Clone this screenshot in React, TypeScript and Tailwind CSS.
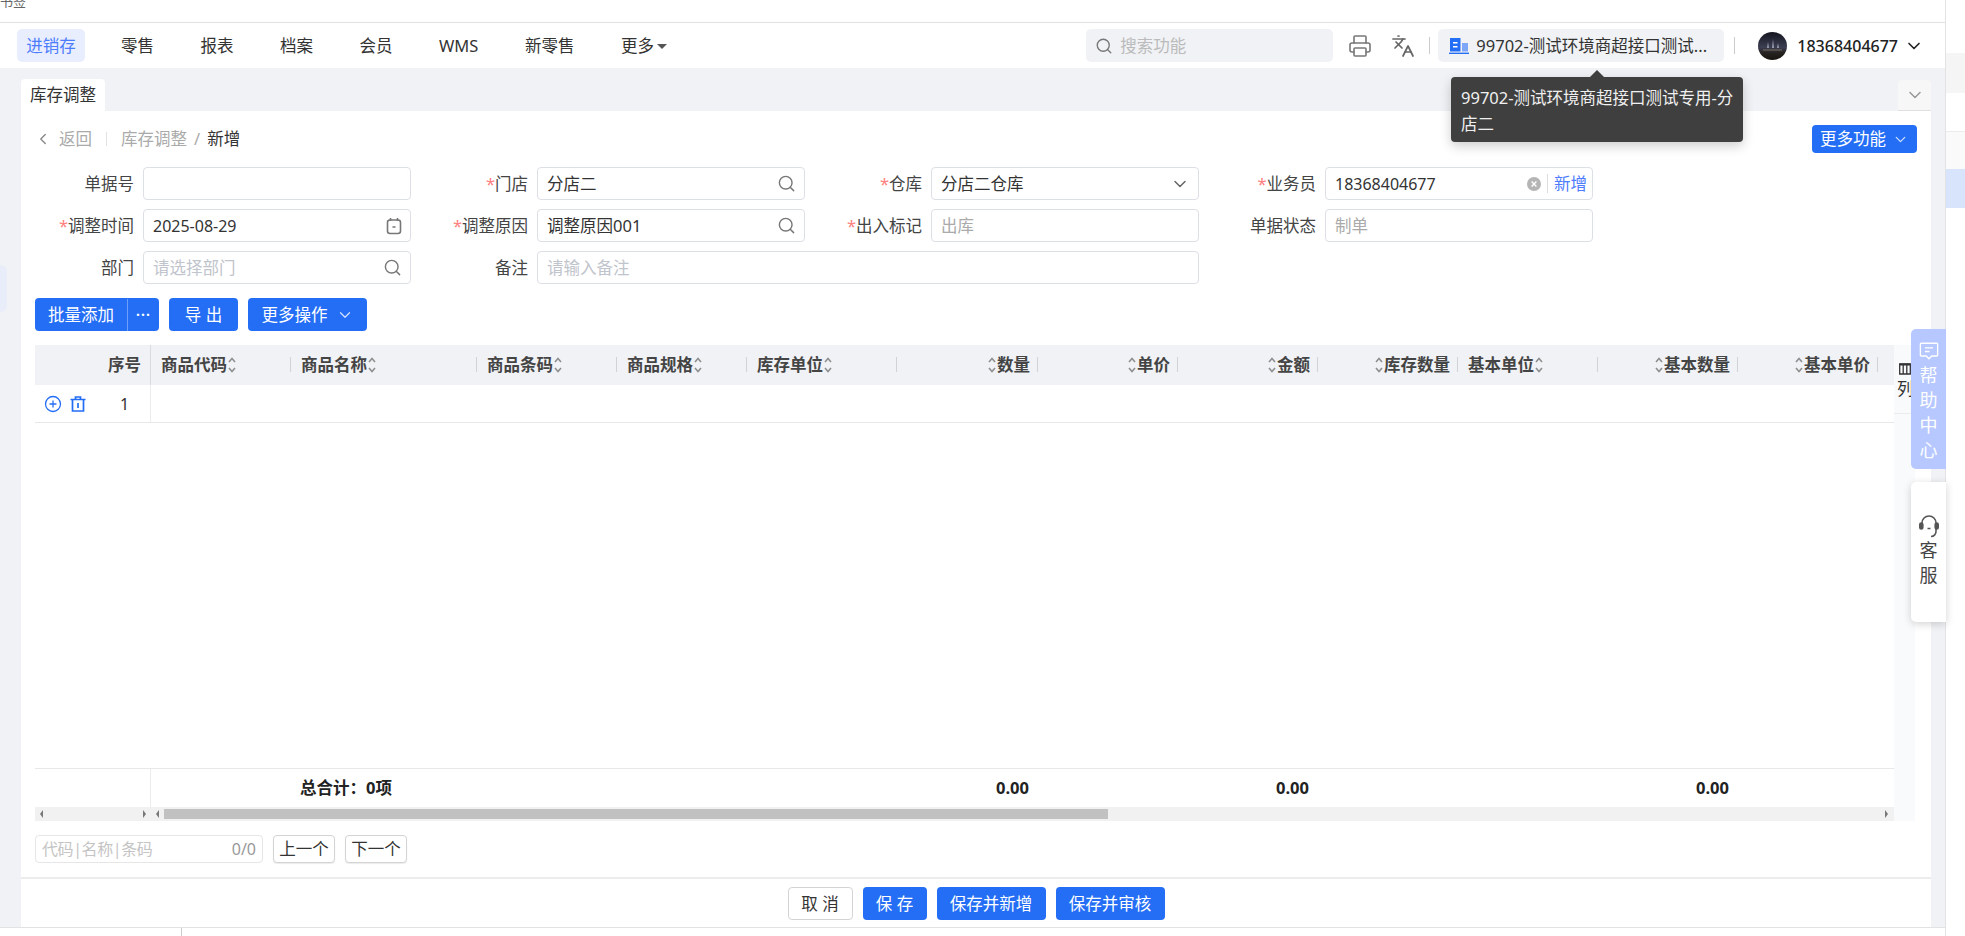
import { ChevronDown, ChevronLeft, CirclePlus, Languages, Printer, Search } from 'lucide-react'
import type { ReactNode } from 'react'

const FONT = "font-['Noto_Sans','Noto_Sans_CJK_SC',sans-serif]"

const NAV_ITEMS = ['零售', '报表', '档案', '会员', 'WMS', '新零售']

type Column = {
  label: string
  width: string
  right?: boolean
  total?: string
}

// widths come from the divider positions in the header
const COLUMNS: Column[] = [
  { label: '商品代码', width: 'w-[140px]' },
  { label: '商品名称', width: 'w-[186px]', total: '总合计：0项' },
  { label: '商品条码', width: 'w-[140px]' },
  { label: '商品规格', width: 'w-[130px]' },
  { label: '库存单位', width: 'w-[150px]' },
  { label: '数量', width: 'w-[141px]', right: true, total: '0.00' },
  { label: '单价', width: 'w-[140px]', right: true },
  { label: '金额', width: 'w-[140px]', right: true, total: '0.00' },
  { label: '库存数量', width: 'w-[140px]', right: true },
  { label: '基本单位', width: 'w-[140px]' },
  { label: '基本数量', width: 'w-[140px]', right: true, total: '0.00' },
  { label: '基本单价', width: 'w-[140px]', right: true },
]

const SortIcon = () => (
  <svg viewBox="0 0 10 20" className="h-[20px] w-[10px] shrink-0" fill="none" stroke="#8f8f8f" strokeWidth="1.6">
    <path d="M2 7l3-3.500L8 7M2 13l3 3.500L8 13" />
  </svg>
)

const Divider = () => <span className="absolute right-0 top-[12px] h-[15px] w-px bg-[#cfd2d6]" />

const HeaderCell = ({ column }: { column: Column }) => (
  <div
    className={`relative flex h-full shrink-0 items-center ${column.width} ${
      column.right ? 'justify-end pr-[8px]' : 'pl-[10px]'
    }`}
  >
    {column.right && <SortIcon />}
    <span className="text-[16.5px] font-bold leading-none text-[#444]">{column.label}</span>
    {!column.right && <SortIcon />}
    <Divider />
  </div>
)

const CalendarIcon = () => (
  <svg viewBox="0 0 16 18" className="h-[18px] w-[16px]" fill="none" stroke="#777" strokeWidth="1.6">
    <rect x="1.500" y="3" width="13" height="13.500" rx="2.500" />
    <path d="M4.500 1v3M11.500 1v3M6.500 10h3" />
  </svg>
)

const ClearIcon = () => (
  <svg viewBox="0 0 14 14" className="h-[14px] w-[14px]">
    <circle cx="7" cy="7" r="7" fill="#b5b5b5" />
    <path d="M4.600 4.600l4.800 4.800M9.400 4.600L4.600 9.400" stroke="#fff" strokeWidth="1.400" />
  </svg>
)

const TrashIcon = () => (
  <svg viewBox="0 0 18 18" className="h-[18px] w-[18px]" fill="none" stroke="#246ef5" strokeWidth="1.700">
    <path d="M1.500 4.500h15M6.500 4.500V2h5v2.500M3.500 4.500v11.500h11V4.500M9 8v5" />
  </svg>
)

const OrgIcon = () => (
  <svg viewBox="0 0 20 16" className="h-[16px] w-[20px] shrink-0">
    <path d="M1 0h10.500v13.500H1z" fill="#246ef5" />
    <path d="M13 5h6v8.500h-6z" fill="#7ea6f7" />
    <path d="M0 14.600h20V16H0z" fill="#246ef5" />
    <path d="M4 4h4.500v1.600H4zM4 8h4.500v1.600H4z" fill="#fff" />
  </svg>
)

const MessageIcon = () => (
  <svg viewBox="0 0 22 20" className="h-[20px] w-[20px]" fill="none" stroke="#fff" strokeWidth="1.500">
    <path d="M2.500 1.500h17a1 1 0 0 1 1 1v12a1 1 0 0 1-1 1h-5.500l-3 3-3-3H2.500a1 1 0 0 1-1-1v-12a1 1 0 0 1 1-1z" />
    <path d="M6.500 6.500h9M6.500 10.500h5" />
  </svg>
)

const HeadsetIcon = () => (
  <svg viewBox="0 0 20 24" className="h-[24px] w-[20px]" fill="none" stroke="#555" strokeWidth="1.600">
    <path d="M3 11V9a7 7 0 0 1 14 0v2" />
    <rect x="0.800" y="9" width="3" height="6" rx="1.500" fill="#555" />
    <rect x="16.200" y="9" width="3" height="6" rx="1.500" fill="#555" />
    <path d="M17 15v2a5 5 0 0 1-5 5.500M8.500 14.500h3" />
  </svg>
)

const ColumnsIcon = () => (
  <svg viewBox="0 0 12 12" className="h-[12px] w-[12px]" fill="none" stroke="#333" strokeWidth="1.300">
    <path d="M.7 1h10.600v10H.7zM4.200 1v10M7.800 1v10" />
    <path d="M.7 1.500h10.600" strokeWidth="2" />
  </svg>
)

const Avatar = () => (
  <svg viewBox="0 0 29 28" className="h-[28px] w-[29px] shrink-0">
    <defs>
      <linearGradient id="avatar-sky" x1="0" y1="0" x2="0" y2="1">
        <stop offset="0" stopColor="#14151f" />
        <stop offset="0.550" stopColor="#3c3e52" />
        <stop offset="0.750" stopColor="#26221f" />
        <stop offset="1" stopColor="#17130f" />
      </linearGradient>
    </defs>
    <ellipse cx="14.500" cy="14" rx="14.500" ry="14" fill="url(#avatar-sky)" />
    <path d="M9 16l1-6 1 6zM14 16l1-9 1 9zM19 16l1-5 1 5z" fill="#9a9db0" />
    <path d="M5 18h19" stroke="#7a6f62" strokeWidth="1" />
  </svg>
)

const Field = ({
  label,
  required,
  wide,
  children,
}: {
  label: string
  required?: boolean
  wide?: boolean
  children: ReactNode
}) => (
  <div className={`flex items-center gap-[9px] ${wide ? 'col-span-2' : ''}`}>
    <label className="w-[99px] shrink-0 pt-px text-right text-[16.5px] leading-[32px] text-[#444]">
      {required && <span className="text-[#ff8080]">*</span>}
      {label}
    </label>
    <div className="flex h-[33px] min-w-0 flex-1 items-center rounded-[4px] border border-[#dcdfe6] bg-white pl-[9px] pr-[8px] text-[16.5px] leading-none">
      {children}
    </div>
  </div>
)

const Value = ({ children }: { children?: ReactNode }) => <span className="flex-1 pt-px text-[#333]">{children}</span>
const Digits = ({ children }: { children: ReactNode }) => (
  <span className="flex-1 pt-px text-[16px] text-[#333]">{children}</span>
)
const Placeholder = ({ children }: { children: ReactNode }) => (
  <span className="flex-1 pt-px text-[#c0c4cc]">{children}</span>
)
const Muted = ({ children }: { children: ReactNode }) => <span className="flex-1 pt-px text-[#aaa]">{children}</span>
const SearchGlyph = () => <Search size={19} strokeWidth={1.800} color="#777" />

const BlueButton = ({ className, children }: { className: string; children: ReactNode }) => (
  <button
    type="button"
    className={`flex items-center justify-center rounded-[4px] bg-[#246ef5] pt-px text-[16.5px] leading-none text-white ${className}`}
  >
    {children}
  </button>
)

const TopBar = () => (
  <div className="flex h-[45px] shrink-0 items-center bg-white pl-[17px] pr-[21px] shadow-[0_1px_3px_rgba(0,0,0,0.12)]">
    <div className="flex h-[33px] w-[68px] items-center justify-center rounded-[5px] bg-[#e8eefd] pt-[2px] text-[16.5px] text-[#4d7cfe]">
      进销存
    </div>
    <div className="ml-[36px] flex items-center gap-[46.500px] pt-[2px] text-[16.5px] text-[#333]">
      {NAV_ITEMS.map(item => (
        <span key={item}>{item}</span>
      ))}
      <span className="flex items-center gap-[3px]">
        更多
        <span className="h-0 w-0 border-x-[5px] border-t-[5px] border-x-transparent border-t-[#555]" />
      </span>
    </div>

    <div className="ml-auto flex items-center">
      <div className="flex h-[33px] w-[247px] items-center gap-[7px] rounded-[5px] bg-[#f0f2f5] pl-[9px] text-[16.5px] text-[#bbb]">
        <Search size={18} strokeWidth={1.800} color="#777" />
        <span className="pt-[2px]">搜索功能</span>
      </div>
      <Printer size={24} strokeWidth={1.600} color="#777" className="ml-[15px]" />
      <Languages size={24} strokeWidth={1.700} color="#666" className="ml-[19px]" />
      <span className="ml-[14px] h-[17px] w-px bg-[#ccc]" />
      <div className="ml-[8px] flex h-[33px] w-[286px] items-center gap-[7px] rounded-[5px] bg-[#f0f2f5] pl-[11px] text-[16.5px] text-[#333]">
        <OrgIcon />
        <span className="whitespace-nowrap pt-px">99702-测试环境商超接口测试...</span>
      </div>
      <span className="ml-[10px] h-[17px] w-px bg-[#ccc]" />
      <div className="ml-[23px]">
        <Avatar />
      </div>
      <span className="ml-[10px] text-[16px] font-medium text-[#222]">18368404677</span>
      <ChevronDown size={20} strokeWidth={2} color="#222" className="ml-[6px]" />
    </div>
  </div>
)

const Breadcrumb = () => (
  <div className="flex h-[56px] shrink-0 items-start justify-between pt-[14px]">
    <div className="flex h-[28px] items-center text-[16.5px] text-[#aaa]">
      <ChevronLeft size={18} strokeWidth={1.800} color="#888" className="ml-[-1px]" />
      <span className="ml-[7px]">返回</span>
      <span className="ml-[14px] h-[14px] w-px bg-[#e2e2e2]" />
      <span className="ml-[14px]">库存调整</span>
      <span className="mx-[7px]">/</span>
      <span className="text-[#333]">新增</span>
    </div>
    <BlueButton className="h-[28px] w-[105px] gap-[6px]">
      更多功能
      <ChevronDown size={17} strokeWidth={1.800} color="#cfe0ff" />
    </BlueButton>
  </div>
)

const FormGrid = () => (
  <div className="grid shrink-0 grid-cols-[repeat(4,376px)] gap-x-[18px] gap-y-[9px]">
    <Field label="单据号">
      <Value />
    </Field>
    <Field label="门店" required>
      <Value>分店二</Value>
      <SearchGlyph />
    </Field>
    <Field label="仓库" required>
      <Value>分店二仓库</Value>
      <ChevronDown size={20} strokeWidth={1.800} color="#666" />
    </Field>
    <Field label="业务员" required>
      <Digits>18368404677</Digits>
      <ClearIcon />
      <span className="ml-[6px] h-[19px] w-px bg-[#ddd]" />
      <span className="ml-[6px] mr-[-3px] pt-px text-[#4d7cfe]">新增</span>
    </Field>
    <Field label="调整时间" required>
      <Digits>2025-08-29</Digits>
      <CalendarIcon />
    </Field>
    <Field label="调整原因" required>
      <Value>调整原因001</Value>
      <SearchGlyph />
    </Field>
    <Field label="出入标记" required>
      <Muted>出库</Muted>
    </Field>
    <Field label="单据状态">
      <Muted>制单</Muted>
    </Field>
    <Field label="部门">
      <Placeholder>请选择部门</Placeholder>
      <SearchGlyph />
    </Field>
    <Field label="备注" wide>
      <Placeholder>请输入备注</Placeholder>
    </Field>
  </div>
)

const Toolbar = () => (
  <div className="mt-[14px] flex h-[33px] shrink-0 gap-[10px]">
    <BlueButton className="h-full w-[124px]">
      <span className="flex h-full w-[93px] items-center justify-center border-r border-[#6d9ef8]">批量添加</span>
      <span className="flex-1 text-center text-[14px] font-bold leading-none tracking-[1px]">···</span>
    </BlueButton>
    <BlueButton className="h-full w-[69px]">导 出</BlueButton>
    <BlueButton className="h-full w-[119px] gap-[8px]">
      更多操作
      <ChevronDown size={18} strokeWidth={1.700} color="#cfe0ff" />
    </BlueButton>
  </div>
)

const ScrollArrow = ({ dir }: { dir: 'left' | 'right' }) => (
  <span
    className={`block h-0 w-0 border-y-[4px] border-y-transparent ${
      dir === 'left' ? 'border-r-[3px] border-r-[#777]' : 'border-l-[3px] border-l-[#777]'
    }`}
  />
)

const DataTable = () => (
  <div className="mt-[14px] flex h-[476px] shrink-0">
    <div className="flex w-[1859px] shrink-0 flex-col">
      <div className="flex h-[40px] shrink-0 bg-[#f0f2f5]">
        <div className="flex h-full w-[116px] shrink-0 items-center justify-end border-r border-[#d8dbe0] pr-[9px] text-[16.5px] font-bold leading-none text-[#444]">
          序号
        </div>
        {COLUMNS.map(column => (
          <HeaderCell key={column.label} column={column} />
        ))}
      </div>

      <div className="flex h-[38px] shrink-0 border-b border-[#e8e8e8]">
        <div className="flex w-[116px] shrink-0 items-center border-r border-[#ececec] pl-[9px]">
          <CirclePlus size={18} strokeWidth={1.700} color="#246ef5" />
          <span className="ml-[7px]">
            <TrashIcon />
          </span>
          <span className="ml-[33px] text-[16px] leading-none text-[#333]">1</span>
        </div>
      </div>

      <div className="flex-1" />

      <div className="flex h-[39px] shrink-0 border-t border-[#e8e8e8]">
        <div className="w-[116px] shrink-0 border-r border-[#ececec]" />
        {COLUMNS.map(column => (
          <div
            key={column.label}
            className={`flex shrink-0 items-center text-[16.5px] font-bold leading-none text-[#222] ${column.width} ${
              column.right ? 'justify-end pr-[9px]' : 'pl-[9px]'
            }`}
          >
            {column.total}
          </div>
        ))}
      </div>

      <div className="flex h-[14px] shrink-0 bg-[#f1f1f1]">
        <div className="flex w-[116px] shrink-0 items-center justify-between px-[5px]">
          <ScrollArrow dir="left" />
          <ScrollArrow dir="right" />
        </div>
        <div className="flex flex-1 items-center pl-[5px] pr-[6px]">
          <ScrollArrow dir="left" />
          <div className="ml-[5px] h-[10px] w-[944px] bg-[#c1c1c1]" />
          <span className="ml-auto">
            <ScrollArrow dir="right" />
          </span>
        </div>
      </div>
    </div>

    {/* fixed column-settings strip on the right of the table */}
    <div className="flex w-[21px] shrink-0 flex-col bg-[#f9fafc]">
      <div className="flex h-[69px] flex-col items-start border-b border-[#ececec] pl-[3px] pt-[18px] text-[16.5px] leading-[20px] text-[#333]">
        <span className="mb-[4px] ml-[2px]">
          <ColumnsIcon />
        </span>
        列
      </div>
    </div>
  </div>
)

const Locator = () => (
  <div className="mt-[14px] flex h-[28px] shrink-0 items-center gap-[10px]">
    <div className="flex h-full w-[228px] items-center justify-between rounded-[4px] border border-[#e6e6e6] px-[6px] text-[16px] leading-none">
      <span className="tracking-[-0.4px] text-[#c4c4c4]">代码|名称|条码</span>
      <span className="text-[#999]">0/0</span>
    </div>
    {['上一个', '下一个'].map(label => (
      <button
        key={label}
        type="button"
        className="h-full w-[62px] rounded-[4px] border border-[#d4d4d4] bg-white text-[16.5px] leading-none text-[#333] shadow-[0_1px_1px_rgba(0,0,0,0.08)]"
      >
        {label}
      </button>
    ))}
  </div>
)

const Footer = () => (
  <div className="mt-auto flex h-[50px] shrink-0 items-start justify-center gap-[10px] border-t-2 border-[#ececec] pt-[8px]">
    <button
      type="button"
      className="h-[33px] w-[65px] rounded-[4px] border border-[#d4d4d4] bg-white pt-px text-[16.5px] leading-none text-[#333]"
    >
      取 消
    </button>
    <BlueButton className="h-[33px] w-[64px]">保 存</BlueButton>
    <BlueButton className="h-[33px] w-[109px]">保存并新增</BlueButton>
    <BlueButton className="h-[33px] w-[109px]">保存并审核</BlueButton>
  </div>
)

const SideStrip = () => (
  <div className="flex w-[20px] shrink-0 flex-col border-l border-[#e2e2e2] bg-white">
    <div className="h-[53px]" />
    <div className="h-[40px] bg-[#f5f5f5]" />
    <div className="h-[38px]" />
    <div className="h-[38px] border-t border-[#ececec] bg-[#fafafa]" />
    <div className="h-[39px] bg-[#d8e4fb]" />
  </div>
)

export default function App() {
  return (
    <div className={`relative flex h-[936px] w-[1965px] overflow-hidden bg-white ${FONT}`}>
      <div className="flex w-[1945px] shrink-0 flex-col">
        <div className="h-[23px] shrink-0 overflow-hidden border-b border-[#e6e6e6] bg-white">
          <span className="mt-[-8px] block text-[13px] leading-[18px] text-[#666]">书签</span>
        </div>
        <TopBar />

        <div className="flex min-h-0 flex-1 bg-[#f0f2f5]">
          <div className="w-[21px] shrink-0">
            <div className="mt-[197px] h-[47px] w-[7px] rounded-r-[6px] bg-[#e9edf9]" />
          </div>
          <div className="flex min-w-0 flex-1 flex-col">
            <div className="flex h-[43px] shrink-0 items-end justify-between">
              <div className="flex h-[32px] w-[84px] items-center justify-center rounded-t-[4px] bg-white pt-px text-[16.5px] text-[#333]">
                库存调整
              </div>
              <div className="flex h-[31px] w-[33px] items-center justify-center rounded-t-[4px] border-b border-[#e0e0e0] bg-[#f7f7f7]">
                <ChevronDown size={20} strokeWidth={1.800} color="#999" />
              </div>
            </div>
            <div className="flex min-h-0 flex-1 flex-col bg-white">
              <div className="flex min-h-0 flex-1 flex-col px-[14px]">
                <Breadcrumb />
                <FormGrid />
                <Toolbar />
                <DataTable />
                <Locator />
              </div>
              <Footer />
            </div>
          </div>
          <div className="w-[14px] shrink-0" />
        </div>

        <div className="flex h-[9px] shrink-0 border-t border-[#e2e2e2] bg-white">
          <span className="ml-[181px] h-full w-px bg-[#ccc]" />
        </div>
      </div>
      <SideStrip />

      {/* tooltip over the org switcher */}
      <div className="absolute left-[1451px] top-[77px] w-[292px] rounded-[4px] bg-[#3f3f3f] pb-[5px] pl-[10px] pr-[4px] pt-[8px] text-[16.5px] leading-[26px] text-[#f0f0f0] shadow-[0_4px_12px_rgba(0,0,0,0.2)]">
        <span className="absolute left-[139px] top-[-7px] h-0 w-0 border-x-[7px] border-b-[7px] border-x-transparent border-b-[#3f3f3f]" />
        99702-测试环境商超接口测试专用-分店二
      </div>

      {/* floating help buttons */}
      <div className="absolute left-[1911px] top-[329px] flex h-[140px] w-[35px] flex-col items-center rounded-l-[5px] bg-[#b6c8ff] pt-[12px] text-[18px] leading-[25px] text-white">
        <span className="mb-[2px]">
          <MessageIcon />
        </span>
        <span>帮</span>
        <span>助</span>
        <span>中</span>
        <span>心</span>
      </div>
      <div className="absolute left-[1911px] top-[482px] flex h-[140px] w-[35px] flex-col items-center justify-center rounded-l-[5px] bg-white pb-[3px] text-[18px] leading-[25px] text-[#444] shadow-[0_2px_8px_rgba(0,0,0,0.18)]">
        <span>
          <HeadsetIcon />
        </span>
        <span>客</span>
        <span>服</span>
      </div>
    </div>
  )
}
